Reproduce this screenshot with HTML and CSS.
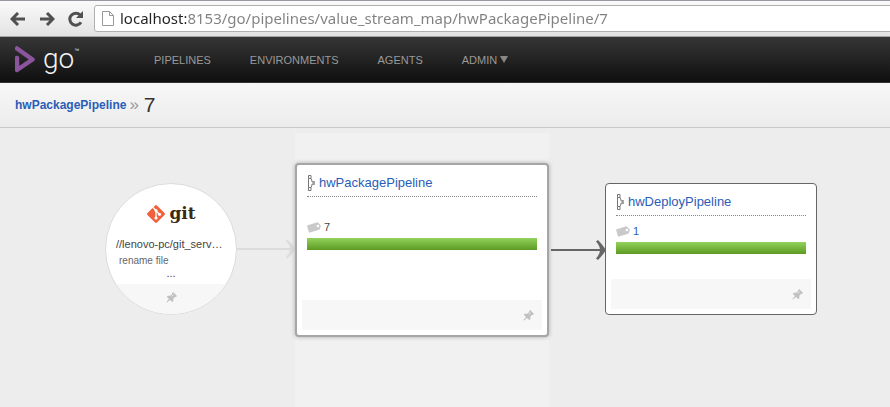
FILE: index.html
```html
<!DOCTYPE html>
<html lang="en">
<head>
<meta charset="utf-8">
<title>Value Stream Map - hwPackagePipeline</title>
<link rel="stylesheet" href="styles.css">
</head>
<body>
<svg class="defs" aria-hidden="true">
  <symbol id="pin" viewBox="0 0 10 10">
    <path d="M6.500 0 10 3.600 9 4.600 8.300 4.400 6.600 6.200 6.700 8.300 5.800 9.200 3.600 7.200 .9 9.600 .3 9.100 2.700 6.300 .7 4.300 1.600 3.300 3.800 3.400 5.700 1.800 5.500 1z" fill="#c0c0c0"/>
    <path d="M5.200 4 6.800 2.500" stroke="#f4f4f4" stroke-width=".8"/>
  </symbol>
  <symbol id="tag" viewBox="0 0 14 11">
    <path d="M0 3.400 9.600.4Q10.400.2 11.200.8L13.600 3.200Q14 3.800 13.700 4.600L12.600 7.200Q12.200 7.900 11.400 8.100L2 10.800z" fill="#c9c9c9"/>
    <circle cx="10.900" cy="4" r="1.300" fill="#fff"/>
  </symbol>
  <symbol id="pipe" viewBox="0 0 8 16">
    <path d="M1.500.5h2.500v3h-2.500zM1.500 12.500h2.500v3h-2.500zM1.500 3.500v9M4 3.500l1 2.500v1h2.500M4 12.500l1-2.500v-1h2.500M7 6v4" fill="none" stroke="#777" stroke-width="1"/>
  </symbol>
</svg>

<div class="toolbar">
  <button class="tool" aria-label="Back"><svg width="16" height="14" viewBox="0 0 16 14"><path d="M8 1 2 7l6 6M2 7h13" class="tool-line"/></svg></button>
  <button class="tool" aria-label="Forward"><svg width="16" height="14" viewBox="0 0 16 14"><path d="m8 1 6 6-6 6M14 7H1" class="tool-line"/></svg></button>
  <button class="tool" aria-label="Reload"><svg width="16" height="16" viewBox="0 0 16 16"><path d="M13 11.200A6 6 0 1 1 12.200 4" class="tool-line"/><path d="M15 0v7H8z" fill="#505050"/></svg></button>
  <label class="address">
    <svg width="12" height="15" viewBox="0 0 12 15"><path d="M.5.500h7l4 4v10H.500zM7.500.500v4h4" fill="#fff" stroke="#999"/></svg>
    <input type="text" aria-label="Address" value="localhost:8153/go/pipelines/value_stream_map/hwPackagePipeline/7">
  </label>
</div>

<header class="header">
  <a class="logo" href="#" aria-label="Go home">
    <svg width="20" height="27" viewBox="0 0 20 27"><path d="M2 2.500 17.500 13.500 2 24V12" fill="none" stroke="#8a559c" stroke-width="4.500" stroke-linecap="round" stroke-linejoin="round"/></svg>
    <span class="logo-word">go</span><span class="logo-mark">™</span>
  </a>
  <nav class="nav">
    <a href="#">PIPELINES</a>
    <a href="#">ENVIRONMENTS</a>
    <a href="#">AGENTS</a>
    <a href="#">ADMIN <svg width="8" height="7" viewBox="0 0 8 7"><path d="M0 0h8L4 7z" fill="#888"/></svg></a>
  </nav>
</header>

<div class="crumbs">
  <a href="#">hwPackagePipeline</a>
  <span class="crumb-sep">»</span>
  <h1>7</h1>
</div>

<main class="map">
  <section class="material">
    <div class="git">
      <svg width="20" height="20" viewBox="0 0 20 20">
        <rect x="3.300" y="3.300" width="13.400" height="13.400" rx="1.300" transform="rotate(45 10 10)" fill="#f1603c"/>
        <path d="M7 3.500 10 6.500V14M10 6.800l3.400 3.400" fill="none" stroke="#fff" stroke-width="1.300"/>
        <circle cx="10" cy="6.500" r="1.500" fill="#fff"/><circle cx="10" cy="14" r="1.600" fill="#fff"/><circle cx="13.500" cy="10.300" r="1.600" fill="#fff"/>
      </svg>
      <span>git</span>
    </div>
    <p class="repo">//lenovo-pc/git_serv…</p>
    <p class="comment">rename file</p>
    <span class="more">...</span>
    <div class="material-foot"><svg width="11" height="11"><use href="#pin"/></svg></div>
  </section>

  <svg class="link link-faint" width="58" height="22" viewBox="0 0 58 22"><path d="M0 11h55"/><path class="head" d="M50 1.500q5 3.500 8 9.500-3 6-8 9.500l-1-1.500q4-4 4-8t-4-8z"/></svg>

  <div class="band">
    <section class="card card-current">
      <h2><svg width="8" height="16"><use href="#pipe"/></svg><a href="#">hwPackagePipeline</a></h2>
      <div class="run"><svg width="14" height="11"><use href="#tag"/></svg><span>7</span></div>
      <div class="bar"></div>
      <div class="card-foot"><svg width="11" height="11"><use href="#pin"/></svg></div>
    </section>
  </div>

  <svg class="link" width="56" height="22" viewBox="0 0 56 22"><path d="M2 12h51"/><path class="head" d="M49 2q4 4 8 10-4 6-8 10l-2-1.500q4-4.500 4-8.500t-4-8.500z"/></svg>

  <section class="card card-next">
    <h2><svg width="8" height="16"><use href="#pipe"/></svg><a href="#">hwDeployPipeline</a></h2>
    <div class="run"><svg width="14" height="11"><use href="#tag"/></svg><a href="#">1</a></div>
    <div class="bar"></div>
    <div class="card-foot"><svg width="11" height="11"><use href="#pin"/></svg></div>
  </section>
</main>
</body>
</html>
```

FILE: styles.css
```css
* { box-sizing: border-box; }

body {
  margin: 0;
  min-height: 100vh;
  display: flex;
  flex-direction: column;
  background: #ededed;
  color: #444;
  font: 11px/14px "Liberation Sans", Arial, sans-serif;
  overflow-x: hidden;
}

a { color: #2a5db8; text-decoration: none; }
h1, h2, p { margin: 0; font-weight: normal; }
svg { display: block; flex: none; }
.defs { position: absolute; width: 0; height: 0; }

/* Browser toolbar */
.toolbar {
  display: flex;
  align-items: center;
  gap: 13px;
  height: 37px;
  padding: 4px 0 4px 10px;
  border-top: 1px solid #9998a2;
  border-bottom: 1px solid #a5a5a5;
  background: linear-gradient(#fbfafb, #e3e3e3);
}
.tool {
  width: 16px;
  padding: 0;
  border: 0;
  background: none;
}
.tool-line { fill: none; stroke: #505050; stroke-width: 3; }
.address {
  flex: 1;
  display: flex;
  align-items: center;
  gap: 6px;
  height: 27px;
  margin: 0 -4px 0 -3px;
  padding-left: 7px;
  border: 1px solid #b0afb2;
  border-radius: 3px;
  background: #fff;
}
.address input {
  flex: 1;
  min-width: 0;
  height: 25px;
  padding: 0 0 2px;
  border: 0;
  outline: 0;
  font: 15px/22px "Noto Sans", "Open Sans", sans-serif;
  color: transparent;
  background: linear-gradient(90deg, #222 66px, #808080 66px);
  -webkit-background-clip: text;
  background-clip: text;
}

/* Site header */
.header {
  display: flex;
  align-items: center;
  height: 46px;
  padding-left: 15px;
  border-bottom: 1px solid #333;
  background: linear-gradient(#363636, #0f0f0f);
}
.logo {
  display: flex;
  width: 139px;
  color: #f4f4f4;
}
.logo-word {
  margin-left: 8px;
  font: 300 28px/26px Roboto, sans-serif;
}
.logo-mark { font-size: 5px; line-height: 8px; }
.nav { display: flex; gap: 39px; }
.nav a {
  display: flex;
  align-items: center;
  gap: 3px;
  color: #999;
}

/* Breadcrumbs */
.crumbs {
  display: flex;
  align-items: center;
  height: 45px;
  padding-left: 15px;
  border-bottom: 1px solid #c9c9c9;
  background: linear-gradient(#f7f7f7, #ececec);
  font-size: 12px;
}
.crumbs a { font-weight: bold; }
.crumb-sep { margin: 0 5px 0 3px; color: #999; font-size: 17px; }
.crumbs h1 { color: #333; font-size: 21px; line-height: 24px; }

/* Value stream map */
.map {
  flex: 1;
  display: flex;
  align-items: flex-start;
  padding: 5px 0 0 105px;
}

.material {
  display: flex;
  flex: none;
  flex-direction: column;
  width: 132px;
  height: 132px;
  margin-top: 50px;
  padding-top: 20px;
  border: 1px solid #dcdcdc;
  border-radius: 50%;
  background: #fff;
  overflow: hidden;
}
.git {
  display: flex;
  justify-content: center;
  gap: 3px;
  height: 20px;
  color: #3a2b0f;
  font: bold 17px/18px "DejaVu Serif", serif;
}
.repo { margin-top: 13px; padding-left: 10px; }
.comment { margin-top: 3px; padding-left: 13px; color: #666; font-size: 10px; }
.more { height: 10px; line-height: 10px; text-align: center; }
.material-foot {
  flex: 1;
  display: flex;
  justify-content: center;
  margin-top: 6px;
  padding-top: 8px;
  background: #f7f7f7;
}

.link {
  margin-top: 105px;
  fill: none;
  stroke: #666;
  stroke-width: 2;
}
.link .head { fill: #666; stroke: none; }
.link-faint { stroke: #dcdcdc; }
.link-faint .head { fill: #dcdcdc; }

.band {
  flex: none;
  align-self: stretch;
  width: 254px;
  padding-top: 30px;
  background: #f1f1f1;
}

.card {
  flex: none;
  display: flex;
  flex-direction: column;
  padding: 10px;
  border-radius: 4px;
  background: #fff;
}
.card-current {
  height: 174px;
  border: 2px solid #a6a6a6;
  box-shadow: 0 0 4px #aaa;
}
.card-next {
  width: 212px;
  height: 132px;
  margin-top: 50px;
  border: 1px solid #666;
}
.card h2 {
  display: flex;
  align-items: center;
  gap: 4px;
  height: 22px;
  padding-bottom: 5px;
  border-bottom: 1px dotted #888;
  font-size: 13px;
  line-height: 16px;
}
.run {
  display: flex;
  align-items: center;
  gap: 3px;
  margin-top: 8px;
}
.card-current .run { margin-top: 23px; }
.bar {
  height: 12px;
  margin-top: 4px;
  background: linear-gradient(#93d25c, #5c9a22);
}
.card-foot {
  display: flex;
  justify-content: flex-end;
  align-items: center;
  height: 30px;
  margin: auto -5px -5px;
  padding-right: 8px;
  background: #f7f7f7;
}
```
